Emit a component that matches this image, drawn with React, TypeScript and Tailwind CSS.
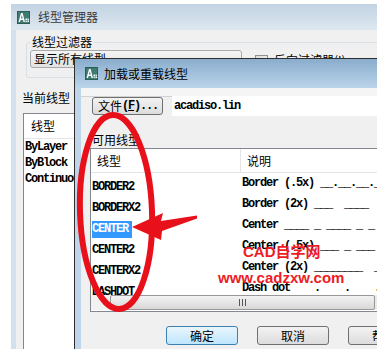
import React from "react";

const cjk = "font-['Noto_Sans_CJK_SC','Noto_Sans_CJK_JP',sans-serif]";
const mono = "font-['Liberation_Mono','Courier_New',monospace] text-[12px] tracking-[-1.2px] font-bold";

function AcadIcon() {
  return (
    <svg width="13" height="13" viewBox="0 0 13 13" className="shrink-0">
      <rect x="0" y="0" width="13" height="13" fill="#3f7b72" />
      <rect x="0.5" y="0.5" width="12" height="12" fill="none" stroke="#2c5d57" />
      <path d="M1.5 11 L4 2 L5.6 2 L8 11 L6.5 11 L6 9 L3.6 9 L3 11 Z M3.9 7.6 L5.7 7.6 L4.8 4.2 Z" fill="#ffffff" fillRule="evenodd" />
      <rect x="8.5" y="7.5" width="1.6" height="1.6" fill="#ffffff" />
      <rect x="10.5" y="9.5" width="1.6" height="1.6" fill="#ffffff" />
      <rect x="8.5" y="9.5" width="1.6" height="1.6" fill="#cfe6df" />
      <rect x="10.5" y="7.5" width="1.6" height="1.6" fill="#cfe6df" />
    </svg>
  );
}

const rows: [string, string][] = [
  ["BORDER2", "Border (.5x) __.__.__._"],
  ["BORDERX2", "Border (2x) ___  ____"],
  ["CENTER", "Center ____ _ ____ _ _"],
  ["CENTER2", "Center (.5x) ___ _ ___ _"],
  ["CENTERX2", "Center (2x) ________  _"],
  ["DASHDOT", "Dash dot    .    .    ."],
];

export default function App() {
  return (
    <div className="relative w-[388px] h-[349px] overflow-hidden bg-white pl-[11px] pt-[4px]">
      {/* Outer window: 线型管理器 */}
      <div className="relative w-[366px] h-[345px] overflow-hidden flex flex-col bg-[#f0f0f0]">
        <div className="h-[26px] shrink-0 bg-linear-to-b from-[#c2d3e2] to-[#dde8f1] flex items-center pl-[6px]">
          <AcadIcon />
          <span className={`${cjk} ml-[8px] text-[12px] leading-[16px] text-[#3a3a3a]`}>线型管理器</span>
        </div>
        <div className="flex flex-1 min-w-0">
          <div className="w-[5px] shrink-0 bg-[#d3e1ee]" />
          <div className="flex-1 min-w-0 flex flex-col bg-[#f0f0f0]">
            <fieldset className="mt-[4px] ml-[10px] w-[400px] h-[44px] shrink-0 border border-[#d5dfe5] rounded-[3px]">
              <legend className={`${cjk} ml-[3px] px-[2px] text-[12px] leading-[16px] text-black`}>线型过滤器</legend>
              <div className="flex items-start">
                <div className={`${cjk} ml-[3px] w-[212px] h-[18px] shrink-0 border border-[#a9a9a9] rounded-[3px] bg-linear-to-b from-[#f4f4f4] to-[#e3e3e3] pl-[3px] text-[12px] leading-[16px] text-black`}>
                  显示所有线型
                </div>
                <div className="ml-[13px] mt-[5px] w-[13px] h-[13px] shrink-0 border border-[#8f8f8f] bg-linear-to-br from-[#dcdcdc] to-[#fbfbfb]" />
                <span className={`${cjk} ml-[6px] mt-[2px] text-[12px] leading-[16px] text-black whitespace-nowrap`}>反向过滤器(I)</span>
              </div>
            </fieldset>
            <div className={`${cjk} mt-[12px] ml-[6px] text-[12px] leading-[16px] text-black`}>当前线型</div>
            <div className="mt-[7px] ml-[7px] w-[200px] h-[300px] shrink-0 border border-[#828790] bg-white">
              <div className="h-[25px] border-b border-[#e5e5e5] flex items-center">
                <span className={`${cjk} pl-[7px] text-[12px] leading-[16px] text-black`}>线型</span>
              </div>
              {["ByLayer", "ByBlock", "Continuous"].map((t) => (
                <div key={t} className={`${mono} h-[16px] leading-[16px] pl-px text-black`}>{t}</div>
              ))}
            </div>
          </div>
        </div>

        {/* Inner dialog: 加载或重载线型 */}
        <div className="absolute left-[63px] top-[54px] w-[330px] h-[300px] border-l border-t border-[#2e2e2e] flex flex-col">
          <div className="h-[29px] shrink-0 bg-linear-to-b from-[#8aadcd] to-[#bbd4ea] flex items-center pl-[10px]">
            <AcadIcon />
            <span className={`${cjk} ml-[6px] text-[12px] leading-[16px] text-black`}>加载或重载线型</span>
          </div>
          <div className="flex flex-1 min-w-0">
            <div className="w-[6px] shrink-0 bg-[#bed5ea]" />
            <div className="flex-1 min-w-0 flex flex-col bg-[#f0f0f0]">
              <div className="h-[9px] shrink-0 bg-[#f5f5f5] border-b border-[#d2d2d2]" />
              <div className="flex items-start pl-[11px]">
                <div className="w-[71px] h-[18px] shrink-0 border border-[#707070] rounded-[3px] bg-linear-to-b from-[#f3f3f3] to-[#dcdcdc] flex items-center pl-[5px] text-black">
                  <span className={`${cjk} text-[12px] leading-[14px]`}>文件</span>
                  <span className={`${mono} leading-[14px]`}>(<span className="underline">F</span>)...</span>
                </div>
                <div className={`${mono} ml-[9px] -mt-px h-[20px] flex-1 bg-white pl-[2px] leading-[20px] text-black`}>acadiso.lin</div>
              </div>
              <div className={`${cjk} mt-[16px] pl-[11px] h-[16px] text-[12px] leading-[16px] text-black`}>可用线型</div>
              <div className="ml-[9px] w-[400px] h-[164px] shrink-0 border border-[#828790] bg-white flex flex-col">
                <div className="h-[24px] shrink-0 flex border-b border-[#e5e5e5]">
                  <div className={`${cjk} w-[150px] shrink-0 border-r border-[#e5e5e5] pl-[6px] text-[12px] leading-[23px] text-black`}>线型</div>
                  <div className={`${cjk} pl-[6px] text-[12px] leading-[23px] text-black`}>说明</div>
                </div>
                <div className="h-[122px] shrink-0 overflow-hidden">
                  {rows.map(([name, desc]) => (
                    <div key={name} className="h-[21px] flex items-center">
                      <div className="w-[150px] shrink-0 pl-px">
                        {name === "CENTER" ? (
                          <span className={`${mono} inline-block w-[40px] h-[17px] leading-[17px] bg-[#3399ff] text-white`}>{name}</span>
                        ) : (
                          <span className={`${mono} leading-[17px] text-black`}>{name}</span>
                        )}
                      </div>
                      <div className={`${mono} pl-px whitespace-pre leading-[17px] text-black`}>{desc}</div>
                    </div>
                  ))}
                </div>
                <div className="h-[15px] shrink-0 flex bg-[#eaeaea]">
                  <div className="w-[19px] shrink-0 bg-[#f2f2f2]" />
                  <div className="w-[265px] h-[15px] shrink-0 border border-[#979797] rounded-[2px] bg-linear-to-b from-[#f3f3f3] to-[#d8d8d8] flex items-center justify-center gap-[2px]">
                    <div className="w-px h-[7px] bg-[#555]" />
                    <div className="w-px h-[7px] bg-[#555]" />
                    <div className="w-px h-[7px] bg-[#555]" />
                  </div>
                </div>
              </div>
              <div className="mt-[14px] pl-[85px] flex gap-[19px]">
                <div className={`${cjk} w-[72px] h-[19px] shrink-0 border border-[#3c7fb1] rounded-[3px] bg-linear-to-b from-[#eaf6fd] to-[#bee6fd] flex items-center justify-center text-[12px] text-black`}>确定</div>
                <div className={`${cjk} w-[72px] h-[19px] shrink-0 border border-[#707070] rounded-[3px] bg-linear-to-b from-[#f3f3f3] to-[#dcdcdc] flex items-center justify-center text-[12px] text-black`}>取消</div>
                <div className={`${cjk} w-[72px] h-[19px] shrink-0 border border-[#707070] rounded-[3px] bg-linear-to-b from-[#f3f3f3] to-[#dcdcdc] flex items-center justify-center text-[12px] text-black`}>帮助</div>
              </div>
            </div>
          </div>
        </div>
      </div>

      {/* Red annotation overlay */}
      <svg className="absolute left-0 top-0 pointer-events-none" width="388" height="349" viewBox="0 0 388 349">
        <ellipse cx="116" cy="212" rx="36" ry="97" fill="none" stroke="#e8101a" strokeWidth="6" transform="rotate(-2 116 212)" />
        <polygon points="132,227 163,213 161,221 197,215.5 197,218.5 162,231 161,240" fill="#e8101a" />
      </svg>

      {/* Watermark */}
      <div className="absolute left-[243px] top-[244px] font-['Liberation_Sans','Noto_Sans_CJK_SC',sans-serif] font-bold text-[15px] leading-[15px] text-[#ee1c24] pointer-events-none">CAD自学网</div>
      <div className="absolute left-[218px] top-[270px] font-['Liberation_Sans',sans-serif] font-bold text-[15px] leading-[15px] text-[#ee1c24] pointer-events-none">www.cadzxw.com</div>
    </div>
  );
}
